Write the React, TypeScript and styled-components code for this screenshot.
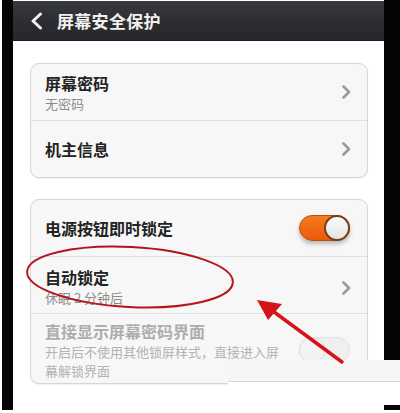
import React from 'react';
import styled, { createGlobalStyle } from 'styled-components';

const GlobalStyle = createGlobalStyle`
  html, body {
    margin: 0;
    padding: 0;
    background: #ffffff;
  }
  body {
    font-family: "Noto Sans CJK SC", "Noto Sans", sans-serif;
  }
`;

const Frame = styled.div`
  position: relative;
  width: 400px;
  height: 413px;
  overflow: hidden;
  background: #ffffff;
  display: flex;
  align-items: flex-start;
`;

const Bezel = styled.div<{ $w: number; $ml?: number }>`
  width: ${({ $w }) => $w}px;
  margin-left: ${({ $ml }) => $ml || 0}px;
  height: 410px;
  background: #050505;
  flex-shrink: 0;
`;

const Screen = styled.div`
  width: 371px;
  flex-shrink: 0;
  display: flex;
  flex-direction: column;
`;

const Header = styled.div`
  height: 39px;
  margin-top: 1px;
  display: flex;
  align-items: center;
  gap: 14px;
  padding-left: 17px;
  background: linear-gradient(180deg, #393a3f 0%, #2c2d31 55%, #26272a 100%);
  border-bottom: 1px solid #1b1b1d;
`;

const Title = styled.div`
  color: #f0f0f0;
  font-size: 17px;
  font-weight: 700;
  letter-spacing: 0.3px;
`;

const Content = styled.div`
  padding: 22px 16px 0 17px;
  display: flex;
  flex-direction: column;
  gap: 21px;
`;

const Card = styled.div`
  width: 338px;
  box-sizing: border-box;
  background: #f7f7f7;
  border: 1px solid #d6d6d6;
  border-radius: 9px;
  box-shadow: 0 1px 1px rgba(0, 0, 0, 0.06);
  display: flex;
  flex-direction: column;
`;

const Row = styled.div<{ $h: number; $pt?: number }>`
  height: ${({ $h }) => $h}px;
  box-sizing: border-box;
  display: flex;
  align-items: ${({ $pt }) => ($pt !== undefined ? 'flex-start' : 'center')};
  justify-content: space-between;
  padding: ${({ $pt }) => $pt || 0}px 16px 0 14px;
  & + & {
    border-top: 1px solid #e1e1e1;
  }
`;

const Texts = styled.div<{ $max?: number }>`
  display: flex;
  flex-direction: column;
  max-width: ${({ $max }) => ($max ? `${$max}px` : 'none')};
`;

const ItemTitle = styled.div<{ $dim?: boolean }>`
  font-size: 16px;
  line-height: 22px;
  font-weight: 700;
  color: ${({ $dim }) => ($dim ? '#adadad' : '#232323')};
`;

const ItemSub = styled.div<{ $dim?: boolean }>`
  font-size: 13px;
  line-height: 19px;
  color: ${({ $dim }) => ($dim ? '#b2b2b2' : '#8c8c8c')};
`;

const Side = styled.span<{ $mt: number }>`
  margin-top: ${({ $mt }) => $mt}px;
  display: flex;
`;

const Switch = styled.div<{ $on?: boolean }>`
  width: 51px;
  height: 26px;
  box-sizing: border-box;
  border-radius: 13px;
  flex-shrink: 0;
  margin-right: 1px;
  display: flex;
  align-items: center;
  justify-content: ${({ $on }) => ($on ? 'flex-end' : 'flex-start')};
  background: ${({ $on }) =>
    $on ? 'linear-gradient(180deg, #f77a1e 0%, #ea5a0c 100%)' : '#efefef'};
  border: 1px solid ${({ $on }) => ($on ? '#b9500f' : '#e2e2e2')};
  box-shadow: ${({ $on }) => ($on ? '0 3px 4px rgba(0,0,0,0.25)' : 'none')};
`;

const Knob = styled.div<{ $on?: boolean }>`
  width: 26px;
  height: 26px;
  box-sizing: border-box;
  border-radius: 50%;
  margin: ${({ $on }) => ($on ? '0 -1px 0 0' : '0 0 0 -1px')};
  background: ${({ $on }) =>
    $on ? 'linear-gradient(180deg, #fafafa 0%, #e4e4e4 100%)' : '#f3f3f3'};
  border: ${({ $on }) => ($on ? '2px solid #7b3d18' : '1px solid #dddddd')};
`;

const Watermark = styled.div`
  position: absolute;
  left: 228px;
  top: 360px;
  width: 172px;
  height: 45px;
  background: #ffffff;
  display: flex;
  flex-direction: column;
`;

const WatermarkBand = styled.div`
  height: 21px;
  background: #f6f6f6;
  border-bottom: 1px solid #d6d6d6;
`;

const Annotation = styled.svg`
  position: absolute;
  left: 0;
  top: 0;
  pointer-events: none;
`;

function Chevron({ color = '#9a9a9a' }: { color?: string }) {
  return (
    <svg width="9" height="14" viewBox="0 0 9 14">
      <path d="M1.5 1.5 L7 7 L1.5 12.5" fill="none" stroke={color} strokeWidth="2.6" strokeLinecap="round" strokeLinejoin="round" />
    </svg>
  );
}

function BackArrow() {
  return (
    <svg width="13" height="18" viewBox="0 0 13 18">
      <path d="M10.5 2 L3 9 L10.5 16" fill="none" stroke="#f2f2f2" strokeWidth="3" strokeLinecap="round" strokeLinejoin="round" />
    </svg>
  );
}

export default function App() {
  return (
    <>
      <GlobalStyle />
      <Frame>
        <Bezel $w={11} $ml={2} />
        <Screen>
          <Header>
            <BackArrow />
            <Title>屏幕安全保护</Title>
          </Header>
          <Content>
            <Card>
              <Row $h={56} $pt={8}>
                <Texts>
                  <ItemTitle>屏幕密码</ItemTitle>
                  <ItemSub>无密码</ItemSub>
                </Texts>
                <Side $mt={13}>
                  <Chevron />
                </Side>
              </Row>
              <Row $h={57}>
                <ItemTitle>机主信息</ItemTitle>
                <Chevron />
              </Row>
            </Card>
            <Card>
              <Row $h={56}>
                <ItemTitle>电源按钮即时锁定</ItemTitle>
                <Switch $on>
                  <Knob $on />
                </Switch>
              </Row>
              <Row $h={57} $pt={9}>
                <Texts>
                  <ItemTitle>自动锁定</ItemTitle>
                  <ItemSub>休眠 2 分钟后</ItemSub>
                </Texts>
                <Side $mt={15}>
                  <Chevron />
                </Side>
              </Row>
              <Row $h={70} $pt={6}>
                <Texts $max={245}>
                  <ItemTitle $dim>直接显示屏幕密码界面</ItemTitle>
                  <ItemSub $dim>开启后不使用其他锁屏样式，直接进入屏幕解锁界面</ItemSub>
                </Texts>
                <Side $mt={17}>
                  <Switch>
                    <Knob />
                  </Switch>
                </Side>
              </Row>
            </Card>
          </Content>
        </Screen>
        <Bezel $w={16} />
        <Watermark>
          <WatermarkBand />
        </Watermark>
        <Annotation width="400" height="413" viewBox="0 0 400 413">
          <ellipse cx="130" cy="277" rx="103" ry="30" fill="none" stroke="#b3151b" strokeWidth="2" transform="rotate(3 130 277)" />
          <line x1="342" y1="362" x2="270" y2="309" stroke="#d4141a" strokeWidth="3.5" strokeLinecap="round" />
          <polygon points="257,300 282,304 268,320" fill="#d4141a" />
        </Annotation>
      </Frame>
    </>
  );
}
